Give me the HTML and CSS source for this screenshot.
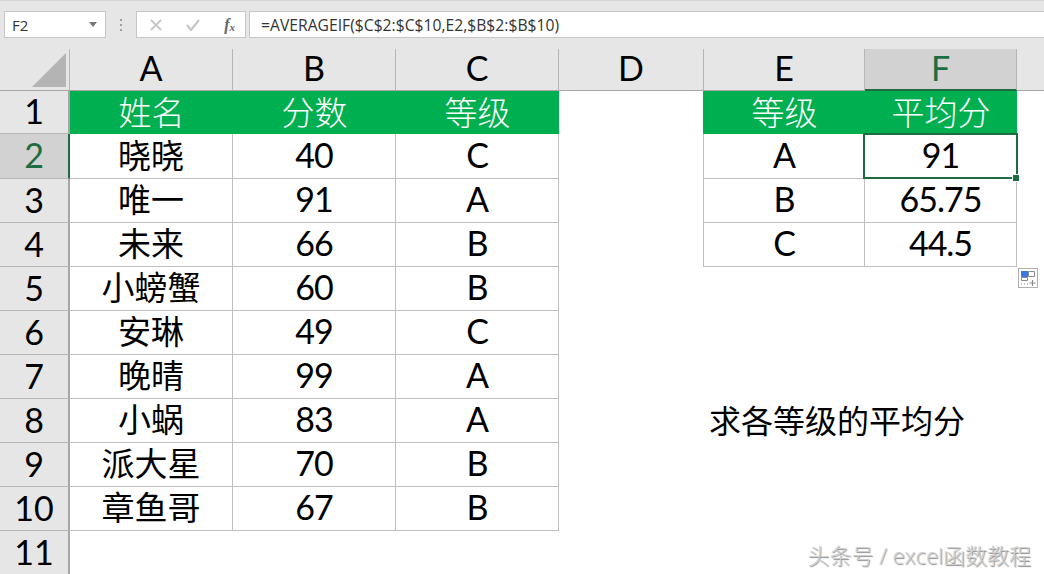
FILE: index.html
```html
<!DOCTYPE html>
<html lang="zh">
<head>
<meta charset="utf-8">
<title>AVERAGEIF</title>
<link rel="stylesheet" href="styles.css">
</head>
<body>
<div class="toolbar">
  <div class="box namebox"><span>F2</span><i class="caret"></i></div>
  <div class="grip"><i></i><i></i><i></i></div>
  <div class="box fxbox">
    <svg class="ico" width="12" height="12" viewBox="0 0 12 12"><path d="M1 1l10 10M11 1L1 11" stroke="#c6c6c6" stroke-width="1.800" fill="none"/></svg>
    <svg class="ico" width="14" height="12" viewBox="0 0 14 12"><path d="M1 6l4 5 8-10" stroke="#c6c6c6" stroke-width="2.200" fill="none"/></svg>
    <span class="fx">f<sub>x</sub></span>
  </div>
  <div class="box formula">=AVERAGEIF($C$2:$C$10,E2,$B$2:$B$10)</div>
</div>
<div class="sheet">
  <div class="corner"><svg width="34" height="34" viewBox="0 0 34 34"><path d="M34 0V34H0Z" fill="#b4b4b4"/></svg></div>
  <div class="ch">A</div><div class="ch">B</div><div class="ch">C</div><div class="ch">D</div><div class="ch">E</div><div class="ch sel">F</div><div class="ch rest"></div>

  <div class="rh">1</div><div class="c h">姓名</div><div class="c h">分数</div><div class="c h">等级</div><div class="e edge-g"></div><div class="c h">等级</div><div class="c h">平均分</div><div class="e"></div>
  <div class="rh rsel">2</div><div class="c zh">晓晓</div><div class="c">40</div><div class="c">C</div><div class="e edge"></div><div class="c">A</div><div class="c">91</div><div class="e"></div>
  <div class="rh">3</div><div class="c zh">唯一</div><div class="c">91</div><div class="c">A</div><div class="e edge"></div><div class="c">B</div><div class="c">65.75</div><div class="e"></div>
  <div class="rh">4</div><div class="c zh">未来</div><div class="c">66</div><div class="c">B</div><div class="e edge"></div><div class="c">C</div><div class="c">44.5</div><div class="e"></div>
  <div class="rh">5</div><div class="c zh">小螃蟹</div><div class="c">60</div><div class="c">B</div><div class="e wide"></div>
  <div class="rh">6</div><div class="c zh">安琳</div><div class="c">49</div><div class="c">C</div><div class="e wide"></div>
  <div class="rh">7</div><div class="c zh">晚晴</div><div class="c">99</div><div class="c">A</div><div class="e wide"></div>
  <div class="rh">8</div><div class="c zh">小蜗</div><div class="c">83</div><div class="c">A</div><div class="e wide note">求各等级的平均分</div>
  <div class="rh">9</div><div class="c zh">派大星</div><div class="c">70</div><div class="c">B</div><div class="e wide"></div>
  <div class="rh">10</div><div class="c zh">章鱼哥</div><div class="c">67</div><div class="c">B</div><div class="e wide"></div>
  <div class="rh last">11</div><div class="e full"></div>
</div>
<div class="selection"><i class="handle"></i></div>
<div class="quick">
  <svg width="20" height="20" viewBox="0 0 20 20"><path d="M3 3h7v6H3z" fill="#3b78e7"/><path d="M10.500 3.500h6v5h-6zM3.500 9.500h6v3h-6z" fill="#fff" stroke="#8a8a8a"/><path d="M3 16h1M6 16h1M9 16h1" stroke="#8a8a8a"/><path d="M14.500 12v6M11.500 15h6" stroke="#8a8a8a" stroke-width="1.200"/></svg>
</div>
<div class="mark">头条号 / excel函数教程</div>
</body>
</html>
```
FILE: styles.css
```css
* { box-sizing: border-box; }
html, body { margin: 0; height: 574px; overflow: hidden; background: #fff; }
body { position: relative; font-family: Lato, "Noto Sans CJK SC", sans-serif; color: #000; }

.toolbar {
  height: 49px;
  background: #e6e6e6;
  border-top: 1px solid #d4d4d4;
  display: flex;
  align-items: flex-start;
  padding: 10px 0 0 4px;
}
.box {
  height: 27px;
  background: #fff;
  border: 1px solid #c6c6c6;
  display: flex;
  align-items: center;
  font: 15.700px "Open Sans", sans-serif;
  color: #333;
}
.namebox { width: 102px; padding: 0 7px; justify-content: space-between; font-size: 15px; }
.caret { border: 4px solid transparent; border-top: 5px solid #777; border-bottom: 0; margin-right: 1px; }
.grip { width: 30px; height: 27px; display: flex; flex-direction: column; align-items: center; justify-content: center; gap: 3px; }
.grip i { width: 2px; height: 2px; background: #a0a0a0; }
.fxbox { width: 110px; padding: 0 10px 0 13px; justify-content: space-between; }
.ico { display: block; }
.fx { font: italic 700 16px "Liberation Serif", serif; color: #666; }
.fx sub { font-size: 11px; vertical-align: -1px; line-height: 0; }
.formula { flex: 1; margin-left: 3px; padding-left: 11px; border-right: 0; }

.sheet {
  display: grid;
  grid-template-columns: 70px 163px 163px 163px 145px 161px 152px 1fr;
  grid-template-rows: 42px 43px 45px repeat(9, 44px);
}
.corner {
  background: #e6e6e6;
  border-right: 1px solid #b6b6b6;
  border-bottom: 1px solid #a6a6a6;
  display: flex;
  align-items: flex-start;
  justify-content: flex-end;
  padding: 4px 3px 0 0;
}
.ch {
  background: #e6e6e6;
  border-right: 1px solid #b6b6b6;
  border-bottom: 1px solid #a6a6a6;
  display: flex;
  align-items: center;
  justify-content: center;
  padding-bottom: 4px;
  font-size: 34px;
}
.ch.sel { background: #d2d2d2; color: #1e6c41; border-bottom: 2px solid #1e6c41; }
.ch.rest { border-right: 0; }

.rh {
  grid-column: 1;
  background: #e6e6e6;
  border-right: 2px solid #a6a6a6;
  border-bottom: 1px solid #b6b6b6;
  display: flex;
  align-items: center;
  justify-content: center;
  padding-bottom: 3px;
  font-size: 34px;
}
.rh.rsel { background: #d2d2d2; color: #1e6c41; border-right: 2px solid #1e6c41; }
.rh.last { border-bottom: 0; }

.c {
  border-right: 1px solid #bfbfbf;
  border-bottom: 1px solid #bfbfbf;
  display: flex;
  align-items: center;
  justify-content: center;
  padding-bottom: 3px;
  font-size: 34px;
  letter-spacing: -1px;
  line-height: 1;
}
.c.zh { font-size: 33px; letter-spacing: 0; padding-bottom: 2px; }
.c.h { background: #00b050; color: #fff; border: 0; padding-bottom: 1px; font-size: 33px; letter-spacing: 0; font-weight: 300; }
.e { background: #fff; }
.edge { border-right: 1px solid #bfbfbf; }
.edge-g { border-right: 1px solid #00b050; }
.wide { grid-column: 5 / span 4; }
.full { grid-column: 2 / span 7; }
.note {
  display: flex;
  align-items: center;
  padding: 0 0 5px 150px;
  font-size: 32px;
}

.selection {
  position: absolute;
  left: 863px;
  top: 133px;
  width: 155px;
  height: 46px;
  border: 2px solid #1e6c41;
}
.handle {
  position: absolute;
  right: -3px;
  bottom: -4px;
  width: 6px;
  height: 6px;
  background: #1e6c41;
  outline: 1px solid #fff;
}
.quick {
  position: absolute;
  left: 1018px;
  top: 268px;
  width: 20px;
  height: 20px;
  background: #fff;
  border: 1px solid #b0b0b0;
}
.quick svg { display: block; margin: -1px; }
.mark {
  position: absolute;
  right: 13px;
  top: 538px;
  font: 300 22px "Open Sans", "Noto Sans CJK SC", sans-serif;
  color: #d0d0d0;
  text-shadow: 1px 1px 1px #8a8a8a;
}
```
